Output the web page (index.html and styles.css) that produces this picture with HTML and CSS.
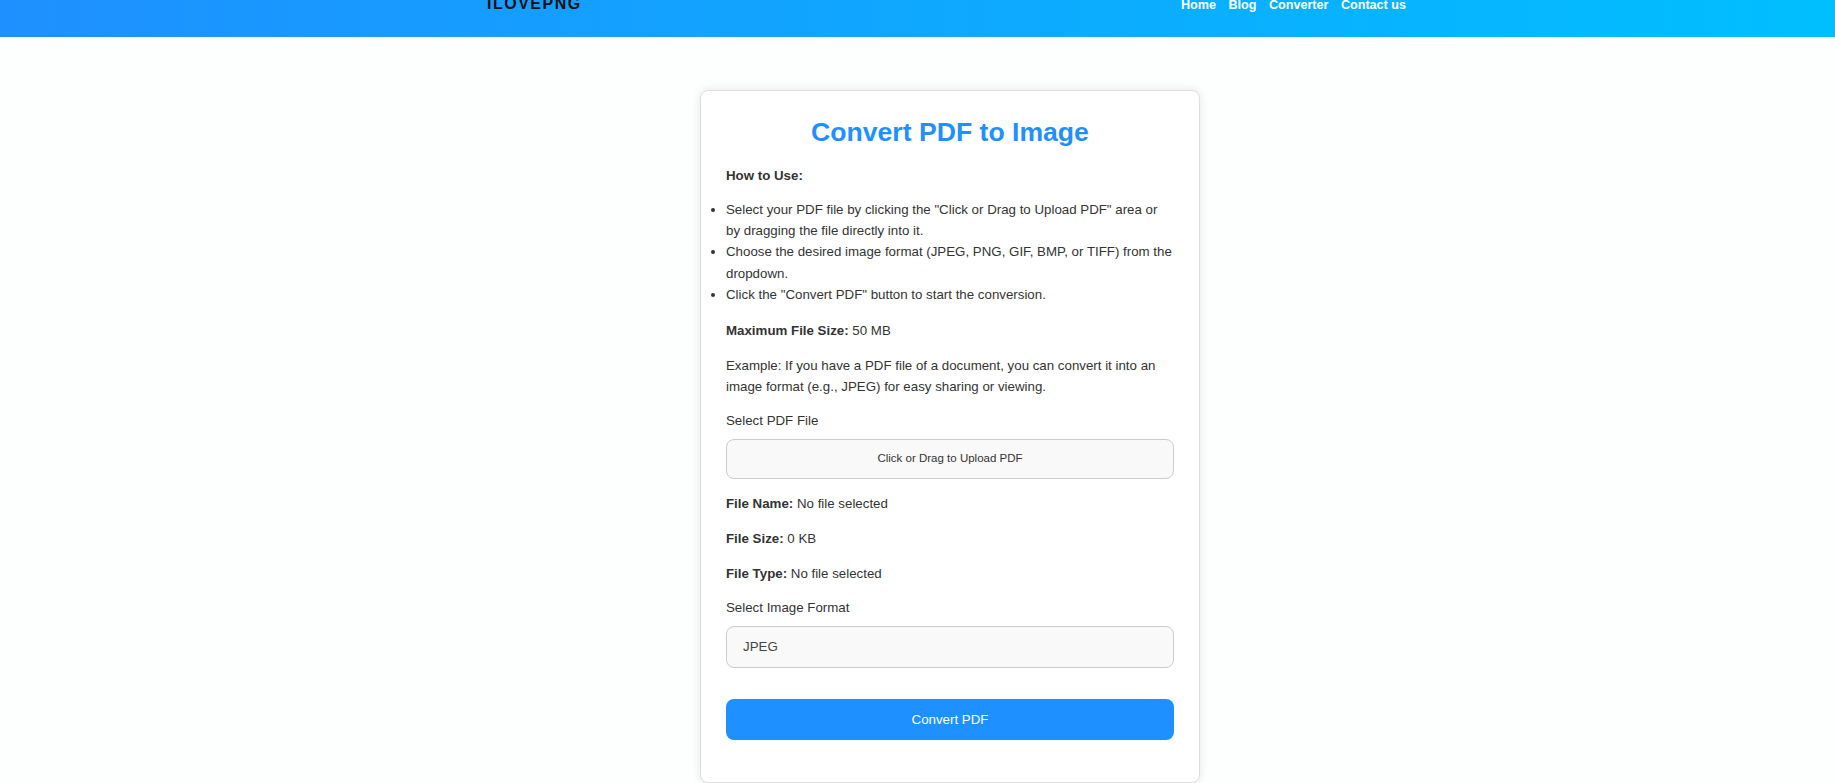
FILE: index.html
```html
<!DOCTYPE html>
<html lang="en">
<head>
    <meta charset="utf-8">
    <title>Convert PDF to Image - ILOVEPNG</title>
    <meta name="viewport" content="width=device-width, initial-scale=1.0">
    <link rel="stylesheet" href="styles.css">
</head>

<body>

    <header class="site-header">
        <div class="header-inner">
            <div class="logo">ILOVEPNG</div>
            <nav class="nav">
                <a href="#">Home</a>
                <a href="#">Blog</a>
                <a href="#">Converter</a>
                <a href="#">Contact us</a>
            </nav>
        </div>
    </header>

    <main class="page">
        <div class="converter-card">
            <h1 class="title">Convert PDF to Image</h1>

            <p class="how-to"><strong>How to Use:</strong></p>
            <ul class="steps">
                <li>Select your PDF file by clicking the "Click or Drag to Upload PDF" area or by dragging the file directly into it.</li>
                <li>Choose the desired image format (JPEG, PNG, GIF, BMP, or TIFF) from the dropdown.</li>
                <li>Click the "Convert PDF" button to start the conversion.</li>
            </ul>

            <p><strong>Maximum File Size:</strong> 50 MB</p>
            <p>Example: If you have a PDF file of a document, you can convert it into an image format (e.g., JPEG) for easy sharing or viewing.</p>

            <label class="field-label" for="pdfInput">Select PDF File</label>
            <div class="upload-box" id="uploadBox">Click or Drag to Upload PDF</div>
            <input type="file" id="pdfInput" accept="application/pdf" hidden>

            <p><strong>File Name:</strong> <span id="fileName">No file selected</span></p>
            <p><strong>File Size:</strong> <span id="fileSize">0 KB</span></p>
            <p><strong>File Type:</strong> <span id="fileType">No file selected</span></p>

            <label class="field-label" for="formatSelect">Select Image Format</label>
            <select id="formatSelect" class="format-select">
                <option value="jpeg">JPEG</option>
                <option value="png">PNG</option>
                <option value="gif">GIF</option>
                <option value="bmp">BMP</option>
                <option value="tiff">TIFF</option>
            </select>

            <button class="convert-btn" id="convertBtn">Convert PDF</button>
        </div>
    </main>

</body>
</html>
```

FILE: styles.css
```css
body {
    margin: 0;
    padding: 0;
    background-color: #fdfefe;
    font-family: "Liberation Sans", Arial, sans-serif;
    font-size: 13.3px;
    line-height: 21px;
    color: #333;
}

.site-header {
    height: 37px;
    padding-left: 65px;
    background: linear-gradient(to right, #1e90ff, #00bfff);
    overflow: hidden;
}

.header-inner {
    width: 1000px;
    margin: -4px auto 0;
    padding: 0 44px 0 37px;
    box-sizing: border-box;
    display: flex;
    justify-content: space-between;
    align-items: baseline;
    line-height: 16px;
}

.logo {
    font-size: 16px;
    font-weight: bold;
    letter-spacing: 1.5px;
    color: #111;
}

.nav {
    display: flex;
    gap: 12.5px;
}

.nav a {
    color: #fff;
    font-size: 12.6px;
    font-weight: bold;
    text-decoration: none;
}

.page {
    padding: 53px 0 0 65px;
    display: flex;
    justify-content: center;
}

.converter-card {
    width: 500px;
    box-sizing: border-box;
    padding: 25px;
    background-color: #fff;
    border: 1px solid #ddd;
    border-radius: 8px;
    box-shadow: 0 0 10px rgba(0, 0, 0, 0.1);
}

.title {
    margin: 0 0 16.5px;
    font-size: 26.6px;
    line-height: 32px;
    color: #1e90ff;
    text-align: center;
}

.converter-card p {
    margin: 14px 0;
}

.converter-card .how-to {
    margin-bottom: 13px;
}

.steps {
    margin: 13px 0;
    padding-left: 0;
    line-height: 21.4px;
}

.field-label {
    display: block;
    margin: -1px 0 8px;
}

.upload-box {
    height: 40px;
    box-sizing: border-box;
    display: flex;
    align-items: center;
    justify-content: center;
    font-size: 11.5px;
    color: #333;
    background-color: #f9f9f9;
    border: 1px solid #ccc;
    border-radius: 8px;
    cursor: pointer;
}

.format-select {
    display: block;
    width: 100%;
    height: 42px;
    padding: 0 16px;
    box-sizing: border-box;
    font-family: inherit;
    font-size: 13.3px;
    color: #444;
    background-color: #f9f9f9;
    border: 1px solid #ccc;
    border-radius: 8px;
    appearance: none;
    -webkit-appearance: none;
}

.convert-btn {
    display: block;
    width: 100%;
    height: 41px;
    margin: 31px 0 17px;
    font-family: inherit;
    font-size: 13.3px;
    color: #fff;
    background-color: #1e90ff;
    border: none;
    border-radius: 8px;
    cursor: pointer;
}

.convert-btn:hover {
    background-color: #1a7fe0;
}
```
